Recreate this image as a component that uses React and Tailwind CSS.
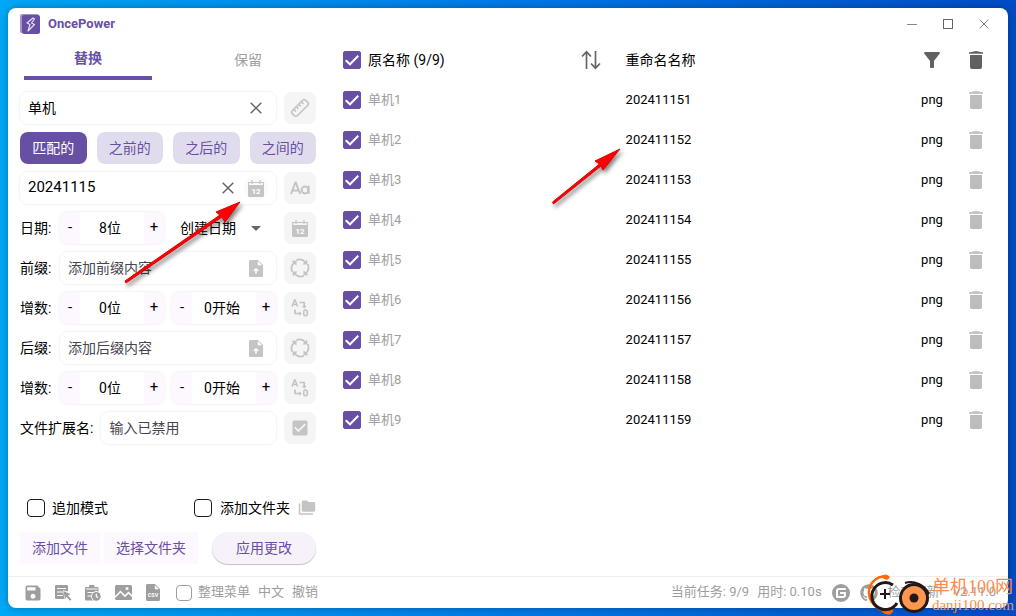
import React, { useState } from 'react';
import { Ruler } from 'lucide-react';
import { FaGithub } from 'react-icons/fa';
import { MdCheckBox, MdFilterAlt, MdFolderCopy, MdSave } from 'react-icons/md';
import { SiGitee } from 'react-icons/si';

const field = 'rounded-lg bg-white shadow-[0_0_3px_rgba(0,0,0,0.1)]';
const sideButton = 'grid size-8 shrink-0 place-items-center rounded-lg bg-[#f5f5f5] text-[#c4c4c4]';
const modes = ['匹配的', '之前的', '之后的', '之间的'];
const files = [1, 2, 3, 4, 5, 6, 7, 8, 9];

/* ---------- icons ---------- */

const LogoIcon = () => (
  <svg width="20" height="20" viewBox="0 0 20 20" aria-hidden="true">
    <rect width="19" height="19" rx="2" fill="#a294cc" />
    <rect x="2" y="1" width="18" height="19" rx="2" fill="#6750a4" />
    <path d="M13 4 7 9l3 1.500-2 6.500 6.500-6.500-3-1.500L14.500 5z" fill="none" stroke="#e6dff5" strokeWidth="1.2" strokeLinejoin="round" />
  </svg>
);

const CloseIcon = ({ size = 12, width = 1.5 }) => (
  <svg width={size} height={size} viewBox="0 0 12 12" aria-hidden="true">
    <path d="M.7.7l10.600 10.600M11.300.7.7 11.300" stroke="currentColor" strokeWidth={width} fill="none" />
  </svg>
);

const CalendarIcon = () => (
  <svg width="16" height="17" viewBox="0 0 16 17" aria-hidden="true">
    <path d="M.5 5V2.500h15V5M4 0v4M12 0v4" stroke="#c4c4c4" strokeWidth="1.2" fill="none" />
    <path d="M0 5h16v10.500a1.500 1.500 0 0 1-1.500 1.500h-13A1.500 1.500 0 0 1 0 15.500z" fill="#c4c4c4" />
    <text x="8" y="14" textAnchor="middle" fontSize="8" fontWeight="700" fill="#fff">12</text>
  </svg>
);

const LetterCaseIcon = () => (
  <svg width="20" height="14" viewBox="0 0 20 14" fill="none" stroke="currentColor" strokeWidth="2" aria-hidden="true">
    <path d="M1 13 5.400 1.500h.4L10.200 13M2.800 9.500h5.600" />
    <circle cx="15" cy="9" r="3.400" />
    <path d="M18.600 4.800V13" />
  </svg>
);

const UploadIcon = () => (
  <svg width="14" height="17" viewBox="0 0 14 17" aria-hidden="true">
    <path d="M1.500 0H9l5 5v10.500a1.500 1.500 0 0 1-1.500 1.500h-11A1.500 1.500 0 0 1 0 15.500v-14A1.500 1.500 0 0 1 1.500 0z" fill="#c4c4c4" />
    <path d="M8.800 1v4.200H13z" fill="#fff" />
    <path d="M7 14V9.500M4.800 11 7 8.800 9.200 11" stroke="#fff" strokeWidth="1.400" fill="none" />
  </svg>
);

const LoopIcon = () => (
  <svg width="20" height="20" viewBox="0 0 20 20" aria-hidden="true">
    {[0, 90, 180, 270].map((angle) => (
      <g key={angle} transform={`rotate(${angle} 10 10)`}>
        <path d="M6 2.300C9 1 13 1.500 15.500 4.500" fill="none" stroke="currentColor" strokeWidth="1.700" />
        <path d="M17.300 1.500v5h-5z" fill="currentColor" />
      </g>
    ))}
  </svg>
);

const ConvertIcon = () => (
  <svg width="18" height="18" viewBox="0 0 18 18" fill="none" stroke="currentColor" aria-hidden="true">
    <path d="M1 7.500 3.500 1h.6l2.500 6.500M1.900 5.500h3.800" strokeWidth="1.600" />
    <path d="M8.500 3.500h4.700V8M4 10.500v4h5.500" strokeWidth="1.700" />
    <path d="m11.500 7 1.700 1.700L15 7M8.200 12.800l1.700 1.700-1.700 1.700" strokeWidth="1.200" />
    <rect x="12.800" y="11" width="3.500" height="5.800" rx="1.700" strokeWidth="1.600" />
  </svg>
);

const SortIcon = () => (
  <svg width="20" height="20" viewBox="0 0 20 20" fill="none" stroke="#666" strokeWidth="1.700" aria-hidden="true">
    <path d="M5.500 19V2M1 6.500 5.500 1.800 10 6.500M14.500 1v17M10 13.500l4.500 4.700 4.500-4.700" />
  </svg>
);

const TrashIcon = () => (
  <svg width="14" height="18" viewBox="0 0 14 18" fill="currentColor" aria-hidden="true">
    <path d="M0 1.200q3 0 4-.7Q7-.4 10 .5q1 .7 4 .7v1.500H0z" />
    <path d="M1 4h12v12a2 2 0 0 1-2 2H3a2 2 0 0 1-2-2z" />
  </svg>
);

const ListPickIcon = () => (
  <svg width="17" height="16" viewBox="0 0 17 16" fill="currentColor" aria-hidden="true">
    <path d="M1 0h11a1 1 0 0 1 1 1v5.500L8 5.300 9.500 14H1a1 1 0 0 1-1-1V1a1 1 0 0 1 1-1z" />
    <path d="M2 3.500h9M2 7h6M2 10.500h6" stroke="#fff" strokeWidth="1.200" />
    <path d="m8.500 6 7 3.300-2.600 1.200 3.600 4-1.500 1.300-3.600-4-1.400 2.400z" />
  </svg>
);

const ClipboardClockIcon = () => (
  <svg width="16" height="16" viewBox="0 0 16 16" aria-hidden="true">
    <path d="M1 2h3V1a1 1 0 0 1 1-1h3.500a1 1 0 0 1 1 1v1h3a1 1 0 0 1 1 1v12.500H1a1 1 0 0 1-1-1V3a1 1 0 0 1 1-1z" fill="currentColor" />
    <path d="M1 4h11.500M2.500 7.500h7M2.500 11h4" stroke="#fff" strokeWidth="1.200" />
    <circle cx="11.300" cy="11.300" r="5.200" fill="#fff" />
    <circle cx="11.300" cy="11.300" r="4.400" fill="currentColor" />
    <path d="M11.300 8.800v2.700l1.800 1.200" stroke="#fff" strokeWidth="1.200" fill="none" />
  </svg>
);

const PictureIcon = () => (
  <svg width="17" height="15" viewBox="0 0 17 15" aria-hidden="true">
    <path d="M1.500 0h14A1.500 1.500 0 0 1 17 1.500V10l-3.500-3.500L10 10 5.500 5.500 0 11V1.500A1.500 1.500 0 0 1 1.500 0z" fill="currentColor" />
    <path d="M0 13l5.500-5.300L10 12.200 13.500 8.700 17 12v1.500a1.500 1.500 0 0 1-1.500 1.500h-14A1.500 1.500 0 0 1 0 13.500z" fill="currentColor" />
    <circle cx="12" cy="3.600" r="1.500" fill="#fff" />
  </svg>
);

const CsvIcon = () => (
  <svg width="14" height="17" viewBox="0 0 14 17" aria-hidden="true">
    <path d="M1.500 0H9l5 5v10.500a1.500 1.500 0 0 1-1.500 1.500h-11A1.500 1.500 0 0 1 0 15.500v-14A1.500 1.500 0 0 1 1.500 0z" fill="currentColor" />
    <path d="M8.800 1v4.200H13z" fill="#fff" />
    <text x="7" y="12.500" textAnchor="middle" fontSize="5.500" fontWeight="700" fill="#fff">CSV</text>
  </svg>
);

/* ---------- controls ---------- */

const Checkbox = ({ id, label, light, checked = false }) => {
  const [on, setOn] = useState(checked);
  return (
    <span className="grid shrink-0 justify-start">
      <input
        id={id}
        type="checkbox"
        aria-label={label}
        checked={on}
        onChange={() => setOn(!on)}
        className={
          light
            ? 'col-start-1 row-start-1 size-4 appearance-none rounded-sm border border-[#9e9e9e] checked:bg-[#9e9e9e]'
            : 'col-start-1 row-start-1 size-[18px] appearance-none rounded-[4px] border border-[#1d1b20] checked:rounded-[2px] checked:border-[#6750a4] checked:bg-[#6750a4]'
        }
      />
      {on && (
        <svg viewBox="0 0 18 18" className="pointer-events-none col-start-1 row-start-1 size-[18px]" aria-hidden="true">
          <path d="M2.700 9.200 7 13.300l8.300-8.500" fill="none" stroke="#fff" strokeWidth="2" />
        </svg>
      )}
    </span>
  );
};

const Stepper = ({ value, label }) => (
  <div className={`flex h-8 w-[104px] overflow-hidden ${field}`}>
    <button type="button" aria-label={`${label} -`} className="w-5 bg-[#fdf7ff] text-[15px]">-</button>
    <input aria-label={label} defaultValue={value} className="w-16 min-w-0 pr-1 text-center outline-none" />
    <button type="button" aria-label={`${label} +`} className="w-5 bg-[#fdf7ff] text-[15px]">+</button>
  </div>
);

const AffixRow = ({ id, label, placeholder }) => (
  <div className="flex items-center gap-2">
    <label htmlFor={id} className="w-8 shrink-0 whitespace-nowrap">{label}</label>
    <div className={`flex h-8 min-w-0 flex-1 items-center px-2 ${field}`}>
      <input id={id} placeholder={placeholder} className="min-w-0 flex-1 outline-none placeholder:text-[#49454f]" />
      <button type="button" aria-label="上传" className="grid size-6 place-items-center"><UploadIcon /></button>
    </div>
    <button type="button" aria-label="循环" className={sideButton}><LoopIcon /></button>
  </div>
);

const CountRow = () => (
  <div className="flex items-center gap-2">
    <span className="w-8 shrink-0 whitespace-nowrap">增数:</span>
    <Stepper value="0位" label="位数" />
    <Stepper value="0开始" label="开始" />
    <button type="button" aria-label="转换" className={sideButton}><ConvertIcon /></button>
  </div>
);

const Sidebar = () => {
  const [mode, setMode] = useState(modes[0]);
  return (
    <aside className="flex w-[296px] shrink-0 flex-col">
      <div className="flex gap-8 px-1" role="tablist">
        <button type="button" role="tab" aria-selected="true" className="h-10 flex-1 border-b-4 border-[#6750a4] font-bold text-[#6750a4]">替换</button>
        <button type="button" role="tab" aria-selected="false" className="h-10 flex-1 text-[#9e9e9e]">保留</button>
      </div>

      <div className="mt-3 flex flex-col gap-2">
        <div className="flex gap-2">
          <div className={`flex h-8 min-w-0 flex-1 items-center px-2 ${field}`}>
            <input aria-label="匹配内容" defaultValue="单机" className="min-w-0 flex-1 outline-none" />
            <button type="button" aria-label="清空" className="grid size-6 place-items-center text-[#666]"><CloseIcon /></button>
          </div>
          <button type="button" aria-label="长度" className={sideButton}><Ruler size={20} className="-scale-x-100" /></button>
        </div>

        <div className="grid grid-cols-4 gap-2.5">
          {modes.map((m) => (
            <button
              key={m}
              type="button"
              onClick={() => setMode(m)}
              className={m === mode ? 'h-8 rounded-lg bg-[#6750a4] text-white' : 'h-8 rounded-lg bg-[#e1dced] text-[#6750a4]'}
            >
              {m}
            </button>
          ))}
        </div>

        <div className="flex gap-2">
          <div className={`flex h-8 min-w-0 flex-1 items-center gap-1 px-2 ${field}`}>
            <input aria-label="替换内容" defaultValue="20241115" className="min-w-0 flex-1 text-[15px] outline-none" />
            <button type="button" aria-label="清空" className="grid size-6 place-items-center text-[#666]"><CloseIcon /></button>
            <button type="button" aria-label="日期" className="grid size-6 place-items-center rounded-full bg-[#fafafa]"><CalendarIcon /></button>
          </div>
          <button type="button" aria-label="大小写" className={sideButton}><LetterCaseIcon /></button>
        </div>

        <div className="flex items-center gap-2">
          <span className="w-8 shrink-0 whitespace-nowrap">日期:</span>
          <Stepper value="8位" label="日期位数" />
          <div className="flex w-[104px] items-center pl-2">
            <select aria-label="日期类型" className="w-[71px] shrink-0 appearance-none outline-none">
              <option>创建日期</option>
            </select>
            <svg width="10" height="5" viewBox="0 0 10 5" aria-hidden="true"><path d="M0 0h10L5 5z" fill="#666" /></svg>
          </div>
          <button type="button" aria-label="使用日期" className={sideButton}><CalendarIcon /></button>
        </div>

        <AffixRow id="prefix" label="前缀:" placeholder="添加前缀内容" />
        <CountRow />
        <AffixRow id="suffix" label="后缀:" placeholder="添加后缀内容" />
        <CountRow />

        <div className="flex items-center gap-2">
          <label htmlFor="ext" className="shrink-0">文件扩展名:</label>
          <input id="ext" placeholder="输入已禁用" className={`h-8 min-w-0 flex-1 px-2 outline-none placeholder:text-[#49454f] ${field}`} />
          <button type="button" aria-label="启用" className={sideButton}><MdCheckBox size={20} /></button>
        </div>
      </div>

      <div className="mt-auto flex items-center justify-between pt-4 pl-[7px]">
        <span className="flex items-center gap-[7px]">
          <Checkbox id="append" />
          <label htmlFor="append">追加模式</label>
        </span>
        <span className="flex items-center gap-2">
          <Checkbox id="folder" />
          <label htmlFor="folder">添加文件夹</label>
          <MdFolderCopy size={18} className="text-[#c4c4c4]" />
        </span>
      </div>

      <div className="mt-3.5 mb-3 flex h-8 text-[#6750a4]">
        <button type="button" className="bg-[#fdf7ff] px-3">添加文件</button>
        <button type="button" className="ml-1 bg-[#fdf7ff] px-3">选择文件夹</button>
        <button type="button" className="ml-auto rounded-full bg-[#f7f2fa] px-6 shadow-[0_1px_1px_rgba(0,0,0,0.25)]">应用更改</button>
      </div>
    </aside>
  );
};

const FileTable = () => (
  <div className="min-w-0 flex-1 pr-[10px]">
    <table className="w-full table-fixed text-[13px]">
      <thead className="text-sm">
        <tr className="h-10">
          <th className="w-7 pl-[3px]"><Checkbox label="全选" checked /></th>
          <th className="w-[39%] text-left font-normal">
            <div className="flex items-center justify-between pr-[22px]">
              <span>原名称 (9/9)</span>
              <button type="button" aria-label="排序" className="grid size-6 place-items-center"><SortIcon /></button>
            </div>
          </th>
          <th className="pl-px text-left font-normal">重命名名称</th>
          <th className="w-11">
            <button type="button" aria-label="筛选" className="grid w-full place-items-center text-[#616161]"><MdFilterAlt size={24} /></button>
          </th>
          <th className="w-11">
            <button type="button" aria-label="全部删除" className="grid w-full place-items-center text-[#616161]"><TrashIcon /></button>
          </th>
        </tr>
      </thead>
      <tbody>
        {files.map((n) => (
          <tr key={n} className="h-10">
            <td className="pl-[3px]"><Checkbox label={`单机${n}`} checked /></td>
            <td className="text-[#9e9e9e]">单机{n}</td>
            <td className="pl-px">20241115{n}</td>
            <td className="text-center">png</td>
            <td>
              <button type="button" aria-label="删除" className="grid w-full place-items-center text-[#bdbdbd]"><TrashIcon /></button>
            </td>
          </tr>
        ))}
      </tbody>
    </table>
  </div>
);

const StatusBar = () => (
  <footer className="flex h-8 items-center border-t border-[#eeeeee] px-3 text-[13px] whitespace-nowrap text-[#9e9e9e]">
    <div className="flex gap-1">
      <button type="button" aria-label="保存" className="grid w-[26px] place-items-center"><MdSave size={20} /></button>
      <button type="button" aria-label="列表" className="grid w-[26px] place-items-center"><ListPickIcon /></button>
      <button type="button" aria-label="记录" className="grid w-[26px] place-items-center"><ClipboardClockIcon /></button>
      <button type="button" aria-label="图片" className="grid w-[26px] place-items-center"><PictureIcon /></button>
      <button type="button" aria-label="CSV" className="grid w-[26px] place-items-center"><CsvIcon /></button>
    </div>
    <div className="ml-[10px] flex items-center gap-1.5">
      <Checkbox id="menu" light />
      <label htmlFor="menu">整理菜单</label>
    </div>
    <button type="button" className="ml-2">中文</button>
    <button type="button" className="ml-2">撤销</button>
    <span className="ml-auto">当前任务: 9/9</span>
    <span className="ml-2">用时: 0.10s</span>
    <a href="#gitee" aria-label="Gitee" className="ml-[10px]"><SiGitee size={18} /></a>
    <a href="#github" aria-label="GitHub" className="ml-[10px]"><FaGithub size={18} /></a>
    <button type="button" className="ml-[10px]">检查更新</button>
    <span className="ml-3.5">v2.11.0</span>
  </footer>
);

const Arrows = () => (
  <svg width="640" height="300" viewBox="0 0 640 300" className="pointer-events-none absolute top-0 left-0 drop-shadow-[2px_3px_2px_rgba(0,0,0,0.5)]" aria-hidden="true">
    <g stroke="#e00000" strokeWidth="1" fill="#ff0000">
      <path d="M125 281l95-66-4-3 24-10-15 20-3-5-96 66z" />
      <path d="M552.500 202l47-38-4.500-3 25-12-17 21-2-4-47.500 38z" />
    </g>
  </svg>
);

const Watermark = () => (
  <div className="pointer-events-none absolute right-0 bottom-0 flex items-center gap-0.5 font-['Liberation_Serif','Noto_Sans_CJK_SC',serif] text-[#ff8a48]">
    <svg width="64" height="42" viewBox="0 0 64 42" fill="none" aria-hidden="true">
      <path d="M23 4C14-1 2 8 3 20c1 11 12 19 24 17" stroke="#ff6a00" strokeWidth="2.500" />
      <path d="M14 3q6-5 10 0l-3 3zM15 36q8 2 13-1l-3 5q-6 2-10-4z" fill="#ff6a00" />
      <path d="M27 11A13.500 13.500 0 1 0 31 29" stroke="#231815" strokeWidth="3" />
      <path d="M19 15v10M14 20h10" stroke="#231815" strokeWidth="2" />
      <circle cx="48" cy="24" r="13.500" fill="#ff9650" stroke="#231815" strokeWidth="3" />
      <path d="M39 9c9-3 20 2 24 11" stroke="#231815" strokeWidth="2" />
      <circle cx="48" cy="24" r="4.500" fill="#231815" />
    </svg>
    <div className="pr-0.5">
      <p className="text-[18px] leading-5">单机100网</p>
      <p className="text-[15px] leading-4">danji100.com</p>
    </div>
  </div>
);

export default function App() {
  return (
    <div className="relative flex min-h-screen flex-col bg-linear-to-r from-[#00a8f6] via-[#007be9] to-[#004cc6] p-2 font-[Roboto,'Noto_Sans_CJK_SC',sans-serif] text-sm text-black">
      <div className="flex flex-1 flex-col overflow-hidden rounded-lg bg-white shadow-[0_0_8px_rgba(0,0,0,0.3)]">
        <header className="flex h-8 items-center justify-between pr-3 pl-3">
          <div className="flex items-center gap-2">
            <LogoIcon />
            <h1 className="text-[13px] font-bold text-[#6750a4]">OncePower</h1>
          </div>
          <div className="flex gap-3 text-[#666]">
            <button type="button" aria-label="最小化" className="grid size-6 place-items-center"><span className="h-px w-2.5 bg-[#888]" /></button>
            <button type="button" aria-label="最大化" className="grid size-6 place-items-center"><span className="size-2.5 border border-[#666]" /></button>
            <button type="button" aria-label="关闭" className="grid size-6 place-items-center"><CloseIcon size={10} width={1} /></button>
          </div>
        </header>
        <main className="flex flex-1 gap-6 pl-3">
          <Sidebar />
          <FileTable />
        </main>
        <StatusBar />
      </div>
      <Arrows />
      <Watermark />
    </div>
  );
}
